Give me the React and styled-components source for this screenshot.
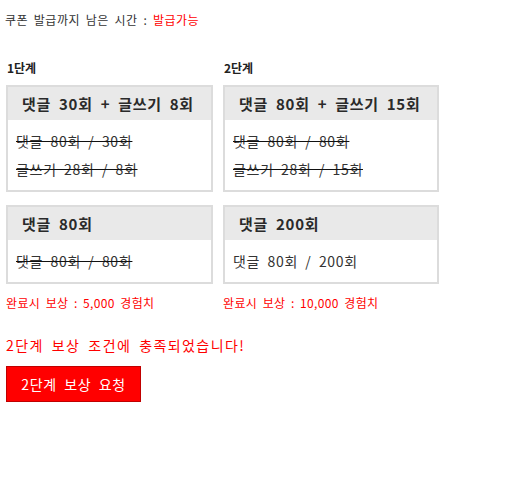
import React from "react";
import styled, { createGlobalStyle } from "styled-components";

const Global = createGlobalStyle`
  html, body { margin: 0; padding: 0; background: #fff; }
  body { font-family: "Noto Sans CJK KR", "Noto Sans", sans-serif; color: #333; }
`;

const Page = styled.div`
  padding: 12px 0 0 6px;
`;

const Notice = styled.div`
  font-size: 12px;
  line-height: 16px;
  color: #333;
  margin-left: -1px;
  letter-spacing: 0.04em;
  word-spacing: 0.22em;
`;

const Red = styled.span`
  color: #ff0000;
`;

const Stages = styled.div`
  display: flex;
  gap: 10px;
  margin-top: 32px;
`;

const Column = styled.div`
  display: flex;
  flex-direction: column;
  width: ${(p) => p.$w}px;
`;

const Label = styled.div`
  font-size: 12px;
  font-weight: bold;
  line-height: 16px;
  color: #222;
  margin: 0 0 9px 1px;
`;

const Box = styled.div`
  border: 2px solid #dcdcdc;
  background: #fff;
  margin-bottom: ${(p) => (p.$last ? 0 : 13)}px;
`;

const BoxHead = styled.div`
  background: #e9e9e9;
  height: 33px;
  display: flex;
  align-items: center;
  padding: 0 14px;
  font-size: 15px;
  font-weight: bold;
  color: #2a2a2a;
  white-space: nowrap;
  letter-spacing: 0.05em;
  word-spacing: 0.25em;
`;

const BoxBody = styled.div`
  padding: 7px 8px;
`;

const Line = styled.div`
  font-size: 14px;
  line-height: 28px;
  color: #333;
  white-space: nowrap;
  letter-spacing: 0.05em;
  word-spacing: 0.25em;
  text-decoration: ${(p) => (p.$done ? "line-through" : "none")};
  text-decoration-color: #111;
`;

const Reward = styled.div`
  margin-top: 11px;
  font-size: 12px;
  line-height: 16px;
  color: #ff0000;
  letter-spacing: 0.03em;
  word-spacing: 0.2em;
`;

const Message = styled.div`
  margin-top: 24px;
  font-size: 14px;
  line-height: 20px;
  color: #ff0000;
  letter-spacing: 0.1em;
  word-spacing: 0.25em;
`;

const Button = styled.button`
  margin-top: 11px;
  width: 135px;
  height: 36px;
  background: #ff0000;
  border: 1px solid #c00000;
  color: #fff;
  font-family: inherit;
  font-size: 14px;
  letter-spacing: 0.05em;
  word-spacing: 0.25em;
  padding: 0;
  cursor: pointer;
`;

const stages = [
  {
    label: "1단계",
    width: 207,
    boxes: [
      { head: "댓글 30회 + 글쓰기 8회", lines: [["댓글 80회 / 30회", true], ["글쓰기 28회 / 8회", true]] },
      { head: "댓글 80회", lines: [["댓글 80회 / 80회", true]] },
    ],
    reward: "완료시 보상 : 5,000 경험치",
  },
  {
    label: "2단계",
    width: 216,
    boxes: [
      { head: "댓글 80회 + 글쓰기 15회", lines: [["댓글 80회 / 80회", true], ["글쓰기 28회 / 15회", true]] },
      { head: "댓글 200회", lines: [["댓글 80회 / 200회", false]] },
    ],
    reward: "완료시 보상 : 10,000 경험치",
  },
];

export default function App() {
  return (
    <Page>
      <Global />
      <Notice>
        쿠폰 발급까지 남은 시간 : <Red>발급가능</Red>
      </Notice>
      <Stages>
        {stages.map((s) => (
          <Column key={s.label} $w={s.width}>
            <Label>{s.label}</Label>
            {s.boxes.map((b, i) => (
              <Box key={i} $last={i === s.boxes.length - 1}>
                <BoxHead>{b.head}</BoxHead>
                <BoxBody>
                  {b.lines.map(([t, done], j) => (
                    <Line key={j} $done={done}>
                      {t}
                    </Line>
                  ))}
                </BoxBody>
              </Box>
            ))}
            <Reward>{s.reward}</Reward>
          </Column>
        ))}
      </Stages>
      <Message>2단계 보상 조건에 충족되었습니다!</Message>
      <Button>2단계 보상 요청</Button>
    </Page>
  );
}
